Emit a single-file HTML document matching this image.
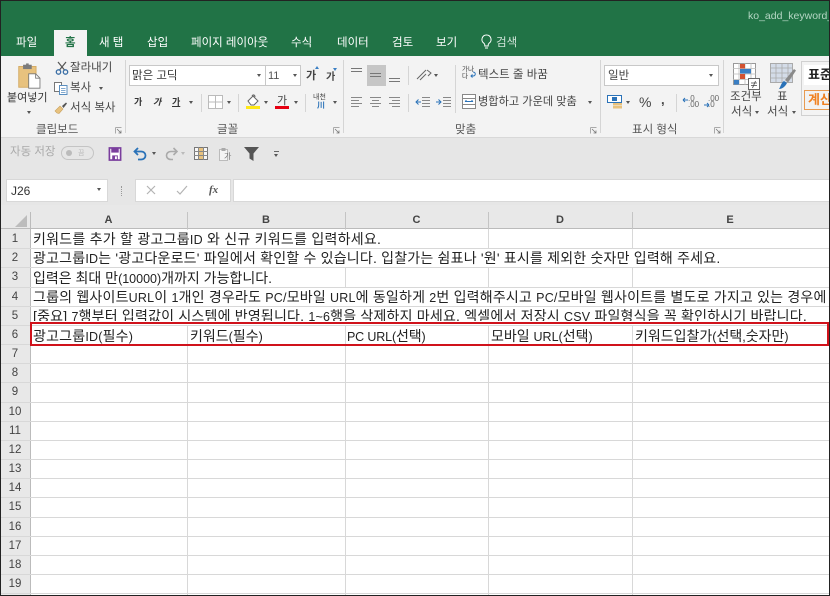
<!DOCTYPE html>
<html lang="ko"><head><meta charset="utf-8"><title>Excel</title>
<style>
html,body{margin:0;padding:0}
body{width:830px;height:596px;overflow:hidden;position:relative;background:#fff;font-family:"Liberation Sans","Noto Sans CJK KR",sans-serif;color:#444}
div,span.a,svg{position:absolute}
.t{white-space:nowrap;font-size:11.5px;line-height:14px;color:#444}
.tab{top:36px;color:#fff;font-size:11.5px;line-height:14px;white-space:nowrap}
.g{font-size:11.5px;color:#555;white-space:nowrap;line-height:14px;top:123px}
.sep{width:1px;background:#d5d5d5}
.box{background:#fff;border:1px solid #c8c8c8;box-sizing:border-box}
.ar{width:0;height:0;border-left:2.5px solid transparent;border-right:2.5px solid transparent;border-top:3px solid #555}
.hl{left:0;width:30px;text-align:center;font-size:11.5px;line-height:19px;color:#444;background:#e8e8e8}
.gl{background:#d8d8d8}
.ch{top:212px;height:17px;text-align:center;font-size:11px;line-height:17px;color:#444;font-weight:bold}
.c{white-space:nowrap;font-size:14px;line-height:19px;color:#222;left:33px}
.c b{font-weight:normal;font-size:12.5px}
.m{background:#fff;height:18px}
</style></head><body>

<div style="left:0;top:0;width:830px;height:56px;background:#217346"></div>
<div style="left:748px;top:8px;color:#b5d6c4;font-size:10.5px;line-height:16px;white-space:nowrap;width:82px;overflow:hidden">ko_add_keyword_</div>
<div style="left:54px;top:30px;width:33px;height:26px;background:#f3f3f3"></div>
<div class="tab" style="left:16px">파일</div>
<div class="tab" style="left:65px;color:#217346;font-weight:bold">홈</div>
<div class="tab" style="left:99px">새 탭</div>
<div class="tab" style="left:147px">삽입</div>
<div class="tab" style="left:191px">페이지 레이아웃</div>
<div class="tab" style="left:291px">수식</div>
<div class="tab" style="left:337px">데이터</div>
<div class="tab" style="left:392px">검토</div>
<div class="tab" style="left:436px">보기</div>
<svg style="left:480px;top:34px" width="13" height="16" viewBox="0 0 13 16"><path d="M6.5 1a4.5 4.5 0 0 0-2.6 8.2c.6.5.9 1 .9 1.8v1h3.4v-1c0-.8.3-1.3.9-1.8A4.500 4.500 0 0 0 6.500 1zM5 14h3" fill="none" stroke="#fff" stroke-width="1"/></svg>
<div class="tab" style="left:496px;color:#cfe3d8">검색</div>

<div style="left:0;top:56px;width:830px;height:81px;background:#f3f3f3;border-bottom:1px solid #d8d8d8"></div>

<!-- clipboard -->
<svg style="left:17px;top:63px" width="26" height="26" viewBox="0 0 28 30"><rect x="1" y="4" width="20" height="24" fill="#e8c27e" stroke="#d3a85f"/><rect x="6" y="2" width="10" height="5" fill="#7b7b7b"/><rect x="9.500" y="0.500" width="3" height="3" fill="#7b7b7b"/><path d="M12.500 12.500h8l5 5v11.500h-13z" fill="#fff" stroke="#777"/><path d="M20.500 12.500v5h5" fill="none" stroke="#777"/></svg>
<div class="t" style="left:7px;top:91px;font-size:11px;color:#333">붙여넣기</div>
<div class="ar" style="left:27px;top:111px"></div>
<svg style="left:55px;top:61px" width="14" height="14" viewBox="0 0 14 14"><path d="M3 1l6.500 8M11 1L4.500 9" stroke="#555" stroke-width="1.200" fill="none"/><circle cx="3.500" cy="11" r="2.200" fill="none" stroke="#3a6ea5" stroke-width="1.300"/><circle cx="10.500" cy="11" r="2.200" fill="none" stroke="#3a6ea5" stroke-width="1.300"/></svg>
<div class="t" style="left:70px;top:61px">잘라내기</div>
<svg style="left:54px;top:81px" width="14" height="14" viewBox="0 0 14 14"><rect x="0.500" y="1.500" width="7" height="9" fill="#fff" stroke="#777"/><rect x="5.500" y="4.500" width="7.500" height="9" fill="#fff" stroke="#5b8fc0"/><path d="M7 7.500h4.500M7 9.500h4.500M7 11.500h4.500" stroke="#5b8fc0" stroke-width=".7"/></svg>
<div class="t" style="left:70px;top:81px">복사</div>
<div class="ar" style="left:99px;top:87px"></div>
<svg style="left:54px;top:101px" width="14" height="14" viewBox="0 0 14 14"><path d="M1 10l5-5 3 3-4 4.500-2-.5z" fill="#e8c27e" stroke="#c9a25f" stroke-width=".6"/><path d="M8 5l4-3.500 1 1L9.500 7z" fill="#555"/></svg>
<div class="t" style="left:70px;top:101px">서식 복사</div>
<div class="g" style="left:36px">클립보드</div>
<svg style="left:115px;top:127px" width="7" height="7"><path d="M.5 .5h6M.5 .5v6" fill="none" stroke="#aaa"/><path d="M2 2l4 4M3.500 6H6V3.500" fill="none" stroke="#777" stroke-width=".8"/></svg>
<div class="sep" style="left:125px;top:60px;height:73px"></div>

<!-- font -->
<div class="box" style="left:129px;top:65px;width:137px;height:21px"></div>
<div class="t" style="left:132px;top:69px;color:#333">맑은 고딕</div>
<div class="ar" style="left:257px;top:74px"></div>
<div class="box" style="left:265px;top:65px;width:36px;height:21px"></div>
<div class="t" style="left:268px;top:69px;font-size:11px;color:#555">11</div>
<div class="ar" style="left:293px;top:74px"></div>
<div class="t" style="left:306px;top:69px;font-size:11px;font-weight:bold">가</div>
<div style="left:315px;top:66px;width:0;height:0;border-left:2px solid transparent;border-right:2px solid transparent;border-bottom:3px solid #3a7fc4"></div>
<div class="t" style="left:326px;top:71px;font-size:10px;font-weight:bold">가</div>
<div style="left:333px;top:68px;width:0;height:0;border-left:2px solid transparent;border-right:2px solid transparent;border-top:3px solid #3a7fc4"></div>
<div class="t" style="left:134px;top:95px;font-size:9px;font-weight:bold;color:#333">가</div>
<div class="t" style="left:153px;top:95px;font-size:9px;font-style:italic;font-weight:bold;color:#333">가</div>
<div class="t" style="left:172px;top:95px;font-size:9px;font-weight:bold;color:#333;text-decoration:underline">가</div>
<div class="ar" style="left:189px;top:101px"></div>
<div class="sep" style="left:201px;top:94px;height:18px"></div>
<svg style="left:208px;top:95px" width="16" height="15"><rect x=".5" y=".5" width="14" height="13" fill="#fff" stroke="#bbb"/><path d="M7.500 0v14M0 7h15" stroke="#bbb"/></svg>
<div class="ar" style="left:227px;top:101px"></div>
<div class="sep" style="left:238px;top:94px;height:18px"></div>
<svg style="left:245px;top:94px" width="16" height="15" viewBox="0 0 16 15"><path d="M3 7l5-5 5 5-4 4H6z" fill="#fff" stroke="#666"/><path d="M7 2c1-2 3-1 3 1" fill="none" stroke="#666"/><rect x="1" y="12" width="14" height="3" fill="#ffe818"/></svg>
<div class="ar" style="left:264px;top:101px"></div>
<div class="t" style="left:277px;top:94px;font-size:11px;color:#444">가</div>
<div style="left:275px;top:106px;width:14px;height:3px;background:#e60012"></div>
<div class="ar" style="left:294px;top:101px"></div>
<div class="sep" style="left:305px;top:94px;height:18px"></div>
<div class="t" style="left:313px;top:94px;font-size:7px;line-height:8px;color:#444">내천</div>
<div class="t" style="left:317px;top:102px;font-size:8px;line-height:8px;color:#2a72b8;font-weight:bold">川</div>
<div class="ar" style="left:333px;top:101px"></div>
<div class="g" style="left:217px">글꼴</div>
<svg style="left:333px;top:127px" width="7" height="7"><path d="M.5 .5h6M.5 .5v6" fill="none" stroke="#aaa"/><path d="M2 2l4 4M3.500 6H6V3.500" fill="none" stroke="#777" stroke-width=".8"/></svg>
<div class="sep" style="left:343px;top:60px;height:73px"></div>

<!-- alignment -->
<div style="left:367px;top:65px;width:19px;height:21px;background:#c6c6c6"></div>
<svg style="left:350px;top:66px" width="64" height="20" stroke="#777" stroke-width="1" fill="none"><path d="M1 2.500h11M1 5.500h11"/><path d="M20 7.500h11M20 10.500h11"/><path d="M39 12.500h11M39 15.500h11"/></svg>
<div class="sep" style="left:408px;top:66px;height:19px"></div>
<svg style="left:415px;top:68px" width="20" height="14" viewBox="0 0 20 14"><path d="M2 11l9-9M5 12l6-6M12 2l4 3-3 3" fill="none" stroke="#666"/></svg>
<div class="ar" style="left:434px;top:74px"></div>
<svg style="left:350px;top:96px" width="64" height="12" stroke="#888" fill="none"><path d="M1 1.500h11M1 4.500h8M1 7.500h11M1 10.500h8"/><path d="M20 1.500h11M22 4.500h7M20 7.500h11M22 10.500h7"/><path d="M39 1.500h11M42 4.500h8M39 7.500h11M42 10.500h8"/></svg>
<div class="sep" style="left:408px;top:94px;height:18px"></div>
<svg style="left:415px;top:95px" width="36" height="14" fill="none"><path d="M7 2.500h8M7 5.500h8M7 8.500h8M7 11.500h8" stroke="#888"/><path d="M1 7h5M3.500 4.500L1 7l2.500 2.500" stroke="#2a72b8"/><path d="M21 7h5M23.500 4.500L26 7l-2.500 2.500" stroke="#2a72b8"/><path d="M28 2.500h8M28 5.500h8M28 8.500h8M28 11.500h8" stroke="#888"/></svg>
<div class="sep" style="left:455px;top:65px;height:48px"></div>
<div class="t" style="left:462px;top:66px;font-size:6.5px;line-height:7px;color:#444">가나<br>다</div>
<svg style="left:470px;top:71px" width="6" height="9"><path d="M3 1c3 0 3 4 0 4H1M2.500 3.500L1 5l1.500 1.500" stroke="#2a72b8" fill="none"/></svg>
<div class="t" style="left:478px;top:68px">텍스트 줄 바꿈</div>
<svg style="left:462px;top:94px" width="14" height="15"><rect x=".5" y=".5" width="13" height="14" fill="#fff" stroke="#888"/><path d="M0 4.500h14M0 10.500h14" stroke="#888"/><path d="M3 7.500h8M3 7.500l1.500-1.200M11 7.500l-1.500-1.200" stroke="#2a72b8" fill="none"/></svg>
<div class="t" style="left:478px;top:95px;font-size:11.2px">병합하고 가운데 맞춤</div>
<div class="ar" style="left:588px;top:101px"></div>
<div class="g" style="left:455px">맞춤</div>
<svg style="left:590px;top:127px" width="7" height="7"><path d="M.5 .5h6M.5 .5v6" fill="none" stroke="#aaa"/><path d="M2 2l4 4M3.500 6H6V3.500" fill="none" stroke="#777" stroke-width=".8"/></svg>
<div class="sep" style="left:600px;top:60px;height:73px"></div>

<!-- number -->
<div class="box" style="left:604px;top:65px;width:115px;height:21px"></div>
<div class="t" style="left:608px;top:69px">일반</div>
<div class="ar" style="left:709px;top:74px"></div>
<svg style="left:607px;top:95px" width="16" height="14"><rect x=".5" y=".5" width="14" height="7" fill="#fff" stroke="#2a72b8"/><rect x="5" y="2" width="5" height="4" fill="#2a72b8"/><rect x="6" y="8" width="9" height="2.500" fill="#e8c27e"/><rect x="6" y="11" width="9" height="2.500" fill="#e8c27e"/></svg>
<div class="ar" style="left:626px;top:101px"></div>
<div class="t" style="left:639px;top:95px;font-size:14px;color:#444">%</div>
<div class="t" style="left:661px;top:93px;font-size:13px;font-weight:bold;color:#444">,</div>
<div class="sep" style="left:676px;top:94px;height:18px"></div>
<div class="t" style="left:688px;top:96px;font-size:8px;line-height:6px;color:#666">.0<br>.00</div>
<div class="t" style="left:708px;top:96px;font-size:8px;line-height:6px;color:#666">.00<br>.0</div>
<svg style="left:682px;top:97px" width="32" height="11" stroke="#2a72b8" fill="none"><path d="M1 3h5M1 3l2-2M1 3l2 2M22 8h5M27 8l-2-2M27 8l-2 2"/></svg>
<div class="g" style="left:632px">표시 형식</div>
<svg style="left:714px;top:127px" width="7" height="7"><path d="M.5 .5h6M.5 .5v6" fill="none" stroke="#aaa"/><path d="M2 2l4 4M3.500 6H6V3.500" fill="none" stroke="#777" stroke-width=".8"/></svg>
<div class="sep" style="left:723px;top:60px;height:73px"></div>

<!-- styles -->
<svg style="left:733px;top:63px" width="27" height="27" viewBox="0 0 27 27"><rect x=".5" y=".5" width="22" height="21" fill="#fff" stroke="#999"/><path d="M6 0v22M12 0v22M18 0v22M0 5.500h23M0 11h23M0 16.500h23" stroke="#bbb" stroke-width=".8"/><rect x="7" y="1" width="5" height="4.500" fill="#d35230"/><rect x="7" y="6" width="11" height="4.500" fill="#3a7fc4"/><rect x="7" y="11" width="5" height="5" fill="#d35230"/><rect x="1" y="17" width="5" height="4.500" fill="#3a7fc4"/><rect x="15.500" y="15.500" width="11" height="11" fill="#fff" stroke="#666"/><path d="M18 20h6M18 22.500h6M19.500 25l3-7" stroke="#444" stroke-width=".8"/></svg>
<div class="t" style="left:730px;top:90px">조건부</div>
<div class="t" style="left:731px;top:105px">서식</div>
<div class="ar" style="left:755px;top:111px"></div>
<svg style="left:770px;top:63px" width="27" height="27" viewBox="0 0 27 27"><rect x=".5" y=".5" width="22" height="19" fill="#d4dce8" stroke="#aaa"/><path d="M6 0v20M12 0v20M18 0v20M0 5h23M0 10h23M0 15h23" stroke="#aaa" stroke-width=".8"/><path d="M9 26c3 0 6-2 8-6l-3-2c-3 2-3 5-5 8z" fill="#2a72b8"/><path d="M15 17l9-11 2 1.500-8 12z" fill="#8a8a8a"/></svg>
<div class="t" style="left:777px;top:90px">표</div>
<div class="t" style="left:767px;top:105px">서식</div>
<div class="ar" style="left:792px;top:111px"></div>
<div style="left:801px;top:61px;width:29px;height:55px;background:#f3f3f3;border:1px solid #d0d0d0;box-sizing:border-box;border-right:0"></div>
<div style="left:804px;top:65px;width:26px;height:20px;background:#fff"></div>
<div class="t" style="left:808px;top:68px;font-size:13px;font-weight:bold;color:#222;width:22px;overflow:hidden">표준</div>
<div style="left:804px;top:90px;width:26px;height:20px;background:#f2f2f2;border:1px solid #e89a50;box-sizing:border-box;border-right:0"></div>
<div class="t" style="left:808px;top:93px;font-size:13px;font-weight:bold;color:#f08020;width:22px;overflow:hidden">계산</div>

<!-- QAT and formula -->
<div style="left:0;top:138px;width:830px;height:74px;background:#e6e6e6"></div>
<div class="t" style="left:10px;top:145px;color:#aaa">자동 저장</div>
<div style="left:61px;top:146px;width:33px;height:14px;border:1px solid #c4c4c4;border-radius:8px;box-sizing:border-box"></div>
<div style="left:66px;top:150px;width:6px;height:6px;border-radius:50%;background:#bbb"></div>
<div class="t" style="left:78px;top:147px;font-size:7px;color:#bbb">끔</div>
<svg style="left:108px;top:147px" width="14" height="14" viewBox="0 0 14 15"><path d="M1 1h12v13H1z" fill="#fff" stroke="#7a3e9d" stroke-width="1.800"/><rect x="3" y="1" width="8" height="5" fill="#7a3e9d"/><rect x="4" y="9" width="6" height="5" fill="#7a3e9d"/><rect x="7" y="10" width="2" height="3" fill="#fff"/></svg>
<svg style="left:133px;top:147px" width="15" height="14" viewBox="0 0 15 14"><path d="M5 1L1.500 4.500 5 8" fill="none" stroke="#2a72b8" stroke-width="1.800"/><path d="M2 4.500h6c6 0 6 8 0 8H5" fill="none" stroke="#2a72b8" stroke-width="1.800"/></svg>
<div class="ar" style="left:152px;top:152px"></div>
<svg style="left:164px;top:147px" width="14" height="14" viewBox="0 0 14 14"><path d="M9.500 1L13 4.500 9.500 8" fill="none" stroke="#aaa" stroke-width="1.600"/><path d="M12.500 4.500H7c-6 0-6 8 0 8h2" fill="none" stroke="#aaa" stroke-width="1.600"/></svg>
<div class="ar" style="left:181px;top:152px;border-top-color:#bbb"></div>
<svg style="left:194px;top:147px" width="14" height="13"><rect x=".5" y=".5" width="13" height="12" fill="#f7f7f7" stroke="#777"/><rect x="5" y="1" width="4" height="11" fill="#e8c27e"/><path d="M4.500 0v13M9.500 0v13M0 4.500h14M0 8.500h14" stroke="#888"/></svg>
<svg style="left:219px;top:147px" width="14" height="16"><rect x=".5" y="2.500" width="8" height="11" fill="#f4f4f4" stroke="#bbb"/><rect x="2.500" y="1" width="4" height="3" fill="#aaa"/></svg>
<div class="t" style="left:224px;top:152px;font-size:8px;line-height:10px;color:#777">가</div>
<svg style="left:244px;top:147px" width="15" height="14" viewBox="0 0 15 14"><path d="M0 0h15L9.500 6.500V14L5.500 11.500V6.500z" fill="#555"/></svg>
<div style="left:274px;top:151px;width:5px;height:1px;background:#666"></div>
<div class="ar" style="left:274px;top:154px"></div>

<div class="box" style="left:6px;top:179px;width:102px;height:23px;border-color:#d8d8d8"></div>
<div class="t" style="left:11px;top:184px;font-size:12px;color:#333">J26</div>
<div class="ar" style="left:97px;top:188px"></div>
<div style="left:121px;top:186px;width:2px;height:10px;border-left:1px dotted #999"></div>
<div class="box" style="left:135px;top:179px;width:96px;height:23px;border-color:#d8d8d8"></div>
<svg style="left:146px;top:185px" width="50" height="11" fill="none" stroke="#b4b4b4" stroke-width="1.200"><path d="M1 1l8 8M9 1l-8 8"/><path d="M31 6l3 3 7-8"/></svg>
<div class="t" style="left:209px;top:183px;font-size:11px;font-style:italic;font-family:'Liberation Serif',serif;color:#555;font-weight:bold">fx</div>
<div class="box" style="left:233px;top:179px;width:597px;height:23px;border-color:#d8d8d8;border-right:0"></div>

<!-- grid -->
<div style="left:0;top:205px;width:830px;height:391px;background:#fff"></div>
<div style="left:0;top:205px;width:830px;height:24px;background:#e8e8e8;border-bottom:1px solid #bbb;box-sizing:border-box"></div>
<div style="left:0;top:229px;width:30px;height:367px;background:#e8e8e8"></div>
<div style="left:30px;top:212px;width:1px;height:384px;background:#bbb"></div>
<svg style="left:15px;top:215px" width="12" height="12"><path d="M12 0v12H0z" fill="#bcbcbc"/></svg>
<div class="ch" style="left:31px;width:155px">A</div>
<div class="ch" style="left:187px;width:158px">B</div>
<div class="ch" style="left:345px;width:143px">C</div>
<div class="ch" style="left:488px;width:144px">D</div>
<div class="ch" style="left:632px;width:196px">E</div>
<div style="left:187px;top:212px;width:1px;height:17px;background:#c4c4c4"></div>
<div style="left:345px;top:212px;width:1px;height:17px;background:#c4c4c4"></div>
<div style="left:488px;top:212px;width:1px;height:17px;background:#c4c4c4"></div>
<div style="left:632px;top:212px;width:1px;height:17px;background:#c4c4c4"></div>

<div class="gl" style="left:187px;top:229px;width:1px;height:366px"></div>
<div class="gl" style="left:345px;top:229px;width:1px;height:366px"></div>
<div class="gl" style="left:488px;top:229px;width:1px;height:366px"></div>
<div class="gl" style="left:632px;top:229px;width:1px;height:366px"></div>

<div class="gl" style="left:0;top:248px;width:830px;height:1px"></div>
<div class="gl" style="left:0;top:267px;width:830px;height:1px"></div>
<div class="gl" style="left:0;top:287px;width:830px;height:1px"></div>
<div class="gl" style="left:0;top:306px;width:830px;height:1px"></div>
<div class="gl" style="left:0;top:325px;width:830px;height:1px"></div>
<div class="gl" style="left:0;top:344px;width:830px;height:1px"></div>
<div class="gl" style="left:0;top:363px;width:830px;height:1px"></div>
<div class="gl" style="left:0;top:382px;width:830px;height:1px"></div>
<div class="gl" style="left:0;top:402px;width:830px;height:1px"></div>
<div class="gl" style="left:0;top:421px;width:830px;height:1px"></div>
<div class="gl" style="left:0;top:440px;width:830px;height:1px"></div>
<div class="gl" style="left:0;top:459px;width:830px;height:1px"></div>
<div class="gl" style="left:0;top:478px;width:830px;height:1px"></div>
<div class="gl" style="left:0;top:497px;width:830px;height:1px"></div>
<div class="gl" style="left:0;top:517px;width:830px;height:1px"></div>
<div class="gl" style="left:0;top:536px;width:830px;height:1px"></div>
<div class="gl" style="left:0;top:555px;width:830px;height:1px"></div>
<div class="gl" style="left:0;top:574px;width:830px;height:1px"></div>
<div class="gl" style="left:0;top:593px;width:830px;height:1px"></div>

<!-- overflow masks -->
<div class="m" style="left:31px;top:230px;width:457px"></div>
<div class="m" style="left:31px;top:249px;width:602px"></div>
<div class="m" style="left:31px;top:268px;width:314px;height:19px"></div>
<div class="m" style="left:31px;top:288px;width:798px"></div>
<div class="m" style="left:31px;top:307px;width:798px"></div>

<div class="hl" style="top:230px;height:18px">1</div>
<div class="hl" style="top:249px;height:18px">2</div>
<div class="hl" style="top:268px;height:19px">3</div>
<div class="hl" style="top:288px;height:18px">4</div>
<div class="hl" style="top:307px;height:18px">5</div>
<div class="hl" style="top:326px;height:18px">6</div>
<div class="hl" style="top:345px;height:18px">7</div>
<div class="hl" style="top:364px;height:18px">8</div>
<div class="hl" style="top:383px;height:19px">9</div>
<div class="hl" style="top:403px;height:18px">10</div>
<div class="hl" style="top:422px;height:18px">11</div>
<div class="hl" style="top:441px;height:18px">12</div>
<div class="hl" style="top:460px;height:18px">13</div>
<div class="hl" style="top:479px;height:18px">14</div>
<div class="hl" style="top:498px;height:19px">15</div>
<div class="hl" style="top:518px;height:18px">16</div>
<div class="hl" style="top:537px;height:18px">17</div>
<div class="hl" style="top:556px;height:18px">18</div>
<div class="hl" style="top:575px;height:18px">19</div>

<div class="c" style="top:230px;letter-spacing:.25px">키워드를 추가 할 광고그룹<b>ID</b> 와 신규 키워드를 입력하세요.</div>
<div class="c" style="top:249px;letter-spacing:.2px">광고그룹<b>ID</b>는 '광고다운로드' 파일에서 확인할 수 있습니다. 입찰가는 쉼표나 '원' 표시를 제외한 숫자만 입력해 주세요.</div>
<div class="c" style="top:269px">입력은 최대 만<b>(10000)</b>개까지 가능합니다.</div>
<div class="c" style="top:288px;width:796px;overflow:hidden;letter-spacing:.2px">그룹의 웹사이트<b>URL</b>이 <b>1</b>개인 경우라도 <b>PC/</b>모바일 <b>URL</b>에 동일하게 <b>2</b>번 입력해주시고 <b>PC/</b>모바일 웹사이트를 별도로 가지고 있는 경우에</div>
<div class="c" style="top:307px;height:14px;overflow:hidden;letter-spacing:.2px">[중요] <b>7</b>행부터 입력값이 시스템에 반영됩니다. <b>1~6</b>행을 삭제하지 마세요. 엑셀에서 저장시 <b>CSV</b> 파일형식을 꼭 확인하시기 바랍니다.</div>
<div class="c" style="top:327px;letter-spacing:.2px">광고그룹<b>ID(</b>필수<b>)</b></div>
<div class="c" style="top:327px;left:190px">키워드<b>(</b>필수<b>)</b></div>
<div class="c" style="top:327px;left:347px;letter-spacing:-.15px"><b>PC URL(</b>선택<b>)</b></div>
<div class="c" style="top:327px;left:491px">모바일 <b>URL(</b>선택<b>)</b></div>
<div class="c" style="top:327px;left:635px">키워드입찰가<b>(</b>선택<b>,</b>숫자만<b>)</b></div>

<div style="left:30px;top:322px;width:799px;height:24px;border:2px solid #d0121b;box-sizing:border-box"></div>

<!-- image outline -->
<div style="left:0;top:0;width:830px;height:596px;border:1px solid #222;box-sizing:border-box;pointer-events:none"></div>
</body></html>
